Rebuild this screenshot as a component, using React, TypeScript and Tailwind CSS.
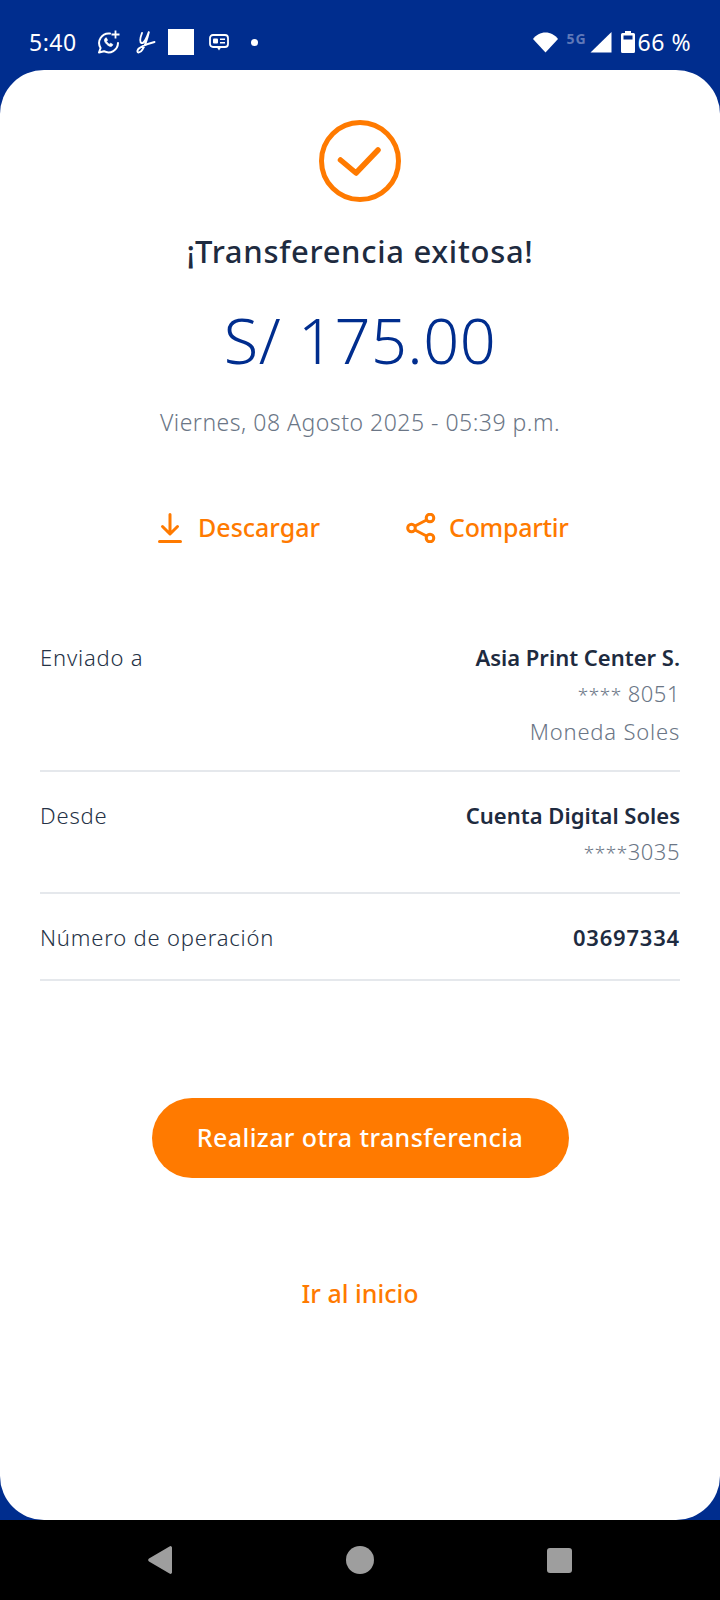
import { Fragment } from "react";

const font = { fontFamily: '"Noto Sans", sans-serif' };

const StatusBar = () => (
  <div className="flex h-[70px] items-start justify-between pl-[29px] pr-[29px] pt-[27px] text-white">
    <div className="flex items-center">
      <span className="w-[50px] text-[23px] leading-[30px] tracking-[0.5px]">5:40</span>
      <div className="ml-[18px] flex items-center">
        <svg width="24" height="24" viewBox="0 0 24 24" fill="none" stroke="white" strokeWidth="2">
          <path d="M13 3.600A9.500 9.500 0 0 0 3.600 18L2 22.500l5-1.300A9.500 9.500 0 0 0 21 13" strokeLinecap="round" strokeLinejoin="round" />
          <path d="M8 8.500c-1 1.500-.5 3.500 1.500 5.500s4 3 5.500 2l.8-1.500-2.300-1.300-1 1c-1.200-.4-2.600-1.800-3-3l1-1-1.200-2.400z" fill="white" strokeWidth="0.8" />
          <path d="M18.500.500v8M14.500 4.500h8" strokeWidth="1.800" />
        </svg>
        <svg className="ml-[15px]" width="20" height="24" viewBox="0 0 20 24" fill="none" stroke="white" strokeWidth="1.900" strokeLinecap="round">
          <path d="M6 3C4.500 7 3 12 5.500 13 8 14 11 7 13 1.500 11.500 8 9.500 15 6.500 19.500 4.500 23 .8 23.500 1.500 20.500 2.300 17.500 9 14.500 18.500 12" />
        </svg>
        <div className="ml-[12px] h-[26px] w-[26px] bg-white" />
        <svg className="ml-[15px]" width="20" height="17" viewBox="0 0 20 17" fill="none">
          <rect x="1" y="1" width="18" height="12" rx="3" stroke="white" strokeWidth="1.800" />
          <rect x="4" y="4.500" width="5" height="5" rx="1" fill="white" />
          <path d="M11 5.200h5M11 8.800h5" stroke="white" strokeWidth="1.600" />
          <path d="M8 13.500h4l-2 3z" fill="white" />
        </svg>
        <div className="ml-[22px] h-[7px] w-[7px] rounded-full bg-white" />
      </div>
    </div>
    <div className="flex items-center">
      <svg width="25" height="22" viewBox="0 0 25 22">
        <path d="M12.500 21.500 0 8C3 4 7.500 1.500 12.500 1.500S22 4 25 8z" fill="white" />
      </svg>
      <span className="mb-[6px] ml-[8px] text-[14px] font-bold leading-none tracking-[1px] text-[#5f78b8]">5G</span>
      <svg className="ml-[3px]" width="22" height="22" viewBox="0 0 22 22">
        <path d="M21.500 1v20.500H.5z" fill="white" />
      </svg>
      <svg className="ml-[9px]" width="14" height="22" viewBox="0 0 14 22">
        <path d="M4 0h6v2h2.500A1.500 1.500 0 0 1 14 3.500v17a1.500 1.500 0 0 1-1.500 1.500h-11A1.500 1.500 0 0 1 0 20.500v-17A1.500 1.500 0 0 1 1.500 2H4z" fill="white" />
        <rect x="2.500" y="4.500" width="9" height="4" fill="#002d8e" />
      </svg>
      <span className="ml-[3px] text-[23px] leading-[30px] tracking-[0.5px]">66 %</span>
    </div>
  </div>
);

const rows = [
  { label: "Enviado a", value: "Asia Print Center S.", stars: "****", extra: "8051", last: "Moneda Soles", box: "h-[160px] pt-[27px]", gap: "ml-[6px]" },
  { label: "Desde", value: "Cuenta Digital Soles", stars: "****", extra: "3035", box: "h-[122px] pt-[25px]", gap: "" },
  { label: "Número de operación", value: "03697334", box: "h-[87px] pt-[25px]", wide: true },
];

const Details = () => (
  <div className="mx-[40px] mt-[64px]">
    {rows.map((row) => (
      <Fragment key={row.label}>
        <div className={`flex justify-between border-b-2 border-[#e5e8ec] ${row.box}`}>
          <span className="text-[22px] font-light leading-[36px] tracking-[0.8px] text-[#253246]">{row.label}</span>
          <div className="text-right">
            <div className={`text-[22px] font-semibold leading-[36px] text-[#1e2b40] ${row.wide ? "tracking-[0.8px]" : ""}`}>{row.value}</div>
            {row.extra && (
              <div className="text-[22px] font-light leading-[36px] tracking-[0.5px] text-[#6b7686]">
                <span className="text-[19px]">{row.stars}</span>
                <span className={row.gap}>{row.extra}</span>
              </div>
            )}
            {row.last && <div className="text-[22px] font-light leading-[36px] tracking-[0.8px] text-[#6b7686]">{row.last}</div>}
          </div>
        </div>
      </Fragment>
    ))}
  </div>
);

export default function App() {
  return (
    <div className="flex h-[1600px] w-[720px] flex-col overflow-hidden bg-[#002d8e]" style={font}>
      <StatusBar />
      <main className="flex h-[1450px] flex-col rounded-[44px] bg-white">
        <div className="mt-[50px] flex justify-center">
          <svg width="82" height="82" viewBox="0 0 82 82" fill="none" stroke="#ff7a00">
            <circle cx="41" cy="41" r="38.500" strokeWidth="5" />
            <path d="M21.500 40 37 53 59 30" strokeWidth="5.500" strokeLinecap="round" strokeLinejoin="round" />
          </svg>
        </div>
        <h1 className="mt-[29px] text-center text-[31px] font-medium leading-[40px] tracking-[0.7px] text-[#1e2b40]">¡Transferencia exitosa!</h1>
        <div className="mt-[29px] text-center text-[63px] font-light leading-[80px] tracking-[0.5px] text-[#002d8e]">S/ 175.00</div>
        <div className="mt-[26px] text-center text-[23px] font-light leading-[32px] tracking-[0.5px] text-[#6b7686]">Viernes, 08 Agosto 2025 - 05:39 p.m.</div>
        <div className="mt-[70px] flex h-[40px] items-center text-[25px] font-medium text-[#ff7a00]">
          <div className="ml-[158px] flex items-center">
            <svg width="24" height="30" viewBox="0 0 24 30" fill="none" stroke="#ff7a00" strokeWidth="3" strokeLinecap="round" strokeLinejoin="round">
              <path d="M12 1.500v19M4.500 13.500l7.500 7.500 7.500-7.500M1.500 28.500h21" />
            </svg>
            <span className="ml-[16px]">Descargar</span>
          </div>
          <div className="ml-[86px] flex items-center">
            <svg width="30" height="30" viewBox="0 0 30 30" fill="none" stroke="#ff7a00" strokeWidth="3">
              <circle cx="5.500" cy="15" r="3.800" />
              <circle cx="24" cy="5" r="3.800" />
              <circle cx="24" cy="25" r="3.800" />
              <path d="M9 13 20.500 7M9 17l11.500 6" />
            </svg>
            <span className="ml-[13px] tracking-[-0.3px]">Compartir</span>
          </div>
        </div>
        <Details />
        <div className="mt-[117px] flex justify-center">
          <button className="h-[80px] w-[417px] rounded-full bg-[#ff7a00] text-[25px] font-medium tracking-[0.4px] text-white">Realizar otra transferencia</button>
        </div>
        <div className="mt-[95px] text-center text-[25px] font-medium leading-[40px] text-[#ff7a00]">Ir al inicio</div>
      </main>
      <div className="flex h-[80px] items-center bg-black">
        <svg className="ml-[148px]" width="25" height="28" viewBox="0 0 25 28">
          <path d="M24 1.500v25a1.500 1.500 0 0 1-2.500 1L1 15.500a2 2 0 0 1 0-3L21.500.500a1.500 1.500 0 0 1 2.500 1z" fill="#9e9e9e" />
        </svg>
        <div className="ml-[173px] h-[28px] w-[28px] rounded-full bg-[#9e9e9e]" />
        <div className="ml-[173px] h-[25px] w-[25px] rounded-[3px] bg-[#9e9e9e]" />
      </div>
    </div>
  );
}
